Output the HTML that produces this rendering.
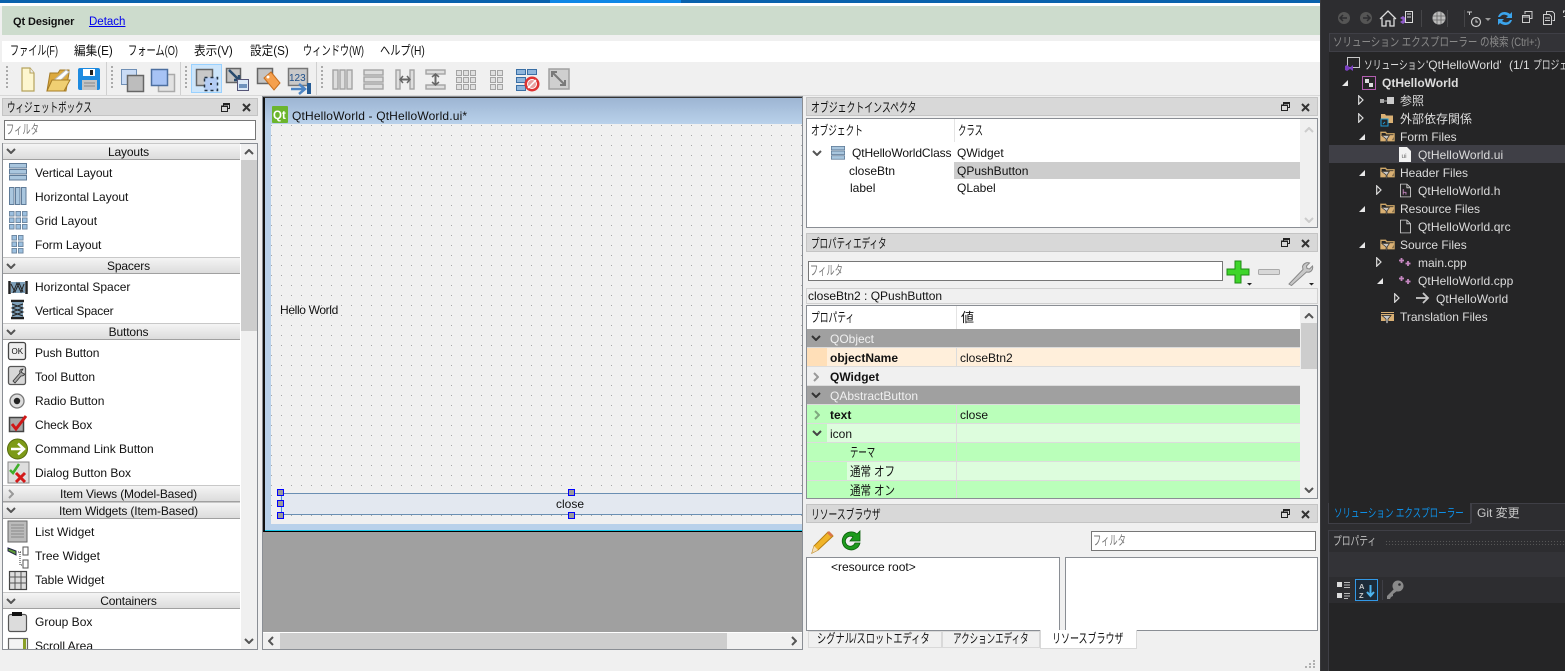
<!DOCTYPE html>
<html lang="ja"><head><meta charset="utf-8"><title>Qt Designer</title>
<style>
html,body{margin:0;padding:0}
body{width:1565px;height:671px;position:relative;overflow:hidden;background:#f0f0f0;font:12px/16px "Liberation Sans","Noto Sans CJK JP",sans-serif;color:#111}
div,span.t,svg.i{position:absolute}
.t{position:absolute;white-space:nowrap;line-height:16px;transform-origin:0 50%}
.k{font-size:13px}
.b{font-weight:bold}
.title{background:#d8d8d8;border:1px solid #c4c4c4;box-sizing:border-box}
.box{background:#fff;border:1px solid #8a8e94;box-sizing:border-box}
.input{background:#fff;border:1px solid #767676;box-sizing:border-box}
.ph{color:#777}
.cat{left:3px;width:237px;background:linear-gradient(#f4f4f4,#dcdcdc);border-bottom:1px solid #a0a0a0;border-top:1px solid #c8c8c8;box-sizing:border-box}
.cat span{position:absolute;left:0;right:-14px;top:0;text-align:center;line-height:16px;white-space:nowrap;letter-spacing:-.15px}
.r{left:807px;width:493px;height:18px}
.vs{position:absolute;left:956px;width:1px;background:#dcdcdc}
.d{color:#dcdcdc;position:absolute;white-space:nowrap;line-height:16px;transform-origin:0 50%}
.tree .d{margin-top:1px}
.h{width:5px;height:5px;background:#9a9a9a;border:1px solid #00f;box-sizing:content-box}
</style></head><body>
<svg width="0" height="0" style="position:absolute">
<defs>
<symbol id="fl" viewBox="0 0 9 9"><path d="M2.5 2.5V.5h6v5h-2M.5 3h6v5.500h-6z M.5 3.500h6M2.500 1.500h6" fill="none" stroke="#222"/></symbol>
<symbol id="xx" viewBox="0 0 9 9"><path d="M1 1l7 7M8 1L1 8" stroke="#333" stroke-width="2"/></symbol>
<symbol id="cd" viewBox="0 0 10 6"><path d="M1 1l4 4 4-4" fill="none" stroke="#555" stroke-width="2"/></symbol>
<symbol id="cr" viewBox="0 0 6 10"><path d="M1 1l4 4-4 4" fill="none" stroke="#999" stroke-width="2"/></symbol>
<symbol id="vl" viewBox="0 0 18 18"><g fill="#a9c6de" stroke="#5f7b98"><rect x=".5" y=".5" width="17" height="4.500"/><rect x=".5" y="6.500" width="17" height="4.500"/><rect x=".5" y="12.500" width="17" height="4.500"/></g></symbol>
<symbol id="gr" viewBox="0 0 6 6"><rect x=".5" y=".5" width="5" height="5" fill="#9cc0e0" stroke="#6c859f"/></symbol>
<symbol id="ff" viewBox="0 0 16 14"><path d="M1 2h5l1 1.500h8V11H1z" fill="none" stroke="#d0a868" stroke-width="1.400"/><path d="M1 5h14L13 11H1z" fill="#d9b074"/><path d="M2 5.500h8L7.500 9v4h-1V9z" fill="#c7c7c7" stroke="#252526" stroke-width=".7"/></symbol>
<symbol id="doc" viewBox="0 0 12 15"><path d="M.5.500h7l4 4v10H.500z" fill="none" stroke="#c8c8c8"/><path d="M7.500.500v4h4" fill="none" stroke="#c8c8c8"/></symbol>
<symbol id="tr" viewBox="0 0 8 8"><path d="M7 1v6H1z" fill="#e8e8e8"/></symbol>
<symbol id="tro" viewBox="0 0 6 10"><path d="M.7.800L5 5 .7 9.200z" fill="none" stroke="#dcdcdc" stroke-width="1.200"/></symbol>
<symbol id="pp" viewBox="0 0 12 8"><path d="M2.500 0v5M0 2.500h5M9 3v5M6.500 5.500h5" stroke="#c586c0" stroke-width="1.800"/></symbol>
</defs></svg>

<!-- top -->
<div style="left:0;top:0;width:1320px;height:3px;background:#0a62ad"></div>
<div style="left:550px;top:0;width:131px;height:3px;background:#0f87e6"></div>
<div style="left:0;top:3px;width:1320px;height:3px;background:#fff"></div>
<div style="left:2px;top:6px;width:1318px;height:29px;background:#cddccd"></div>
<span class="t b" style="left:13px;top:14px;font-size:11px;letter-spacing:-.1px">Qt Designer</span>
<span class="t" style="left:89px;top:14px;color:#00e;text-decoration:underline;font-size:11.500px">Detach</span>
<div style="left:2px;top:41px;width:1318px;height:21px;background:#fff"></div>
<span class="t k" style="left:10px;top:43px;transform:scaleX(.70)">ファイル(F)</span>
<span class="t" style="left:74px;top:43px;font-size:12.500px;transform:scaleX(.93)">編集(E)</span>
<span class="t k" style="left:128px;top:43px;transform:scaleX(.71)">フォーム(O)</span>
<span class="t" style="left:194px;top:43px;font-size:12.500px;transform:scaleX(.93)">表示(V)</span>
<span class="t" style="left:250px;top:43px;font-size:12.500px;transform:scaleX(.93)">設定(S)</span>
<span class="t k" style="left:303px;top:43px;transform:scaleX(.71)">ウィンドウ(W)</span>
<span class="t k" style="left:380px;top:43px;transform:scaleX(.785)">ヘルプ(H)</span>

<!-- toolbar -->
<div style="left:0;top:95px;width:1320px;height:1px;background:#d8d8d8"></div>
<svg class="i" style="left:0;top:62px" width="600" height="34">
<g stroke="#aaa" stroke-dasharray="2 2" stroke-width="2"><path d="M7 4v24M112 4v24M186 4v24M322 4v24"/></g>
<path d="M106.500 0v33M180.500 0v33M316.500 0v33" stroke="#d0d0d0"/>
<path d="M22 6h8l4 5v18H22z" fill="#fdf6cf" stroke="#b5a25c" stroke-width="1.200"/><path d="M30 6v5h4" fill="#eee" stroke="#b5a25c"/>
<path d="M47 29l3-18h8l2-3h9v3l-3 18z" fill="#dca93e" stroke="#a67c26"/><path d="M54 18l12-10 3 2-10 10z" fill="#fff" stroke="#bbb"/><path d="M47 29l5-11h18l-6 11z" fill="#f0cf72" stroke="#a67c26"/>
<rect x="78" y="6" width="22" height="22" rx="2" fill="#1e8be0"/><rect x="83" y="7" width="12" height="7" fill="#fff"/><rect x="90" y="8" width="3" height="5" fill="#222"/><rect x="82" y="18" width="15" height="10" fill="#c4c4c4"/><path d="M84 21h11M84 24h11" stroke="#888"/>
<rect x="121.500" y="7.500" width="15" height="15" fill="#c9dbf5" stroke="#6f8fb5"/><rect x="127.500" y="13.500" width="16" height="16" fill="#bdbdbd" stroke="#666" stroke-width="1.500"/>
<rect x="158.500" y="12.500" width="16" height="17" fill="#e2e2e2" stroke="#aaa" stroke-width="1.500"/><rect x="151.500" y="7.500" width="16" height="16" fill="#a7c3f5" stroke="#4d6fa0" stroke-width="1.500"/>
<rect x="191.500" y="2.500" width="30" height="28" fill="#cde5fa" stroke="#99d1ff"/>
<rect x="196.500" y="7.500" width="16" height="16" fill="#c8c8c8" stroke="#666" stroke-width="1.500"/><rect x="204.500" y="15.500" width="13" height="13" fill="#b4cdf5" stroke="#234" stroke-width="1.500" stroke-dasharray="3 3"/><rect x="210" y="21" width="2" height="2" fill="#333"/>
<rect x="226.500" y="6.500" width="14" height="14" fill="#c4c4c4" stroke="#666" stroke-width="1.500"/><path d="M229 8l9 9M234 18h5v-5" stroke="#274a6e" stroke-width="2.500" fill="none"/><rect x="237.500" y="17.500" width="11" height="11" fill="#dbe8f7" stroke="#557"/><rect x="239" y="22" width="8" height="4" fill="#6f92bd"/>
<rect x="257.500" y="6.500" width="15" height="15" fill="#c4c4c4" stroke="#666" stroke-width="1.500"/><path d="M264 16l7-6 9 11-6 7z" fill="#f5a04e" stroke="#c76f1f"/><circle cx="268" cy="15" r="1.500" fill="#fff"/>
<rect x="288.500" y="6.500" width="19" height="17" fill="#c9c9c9" stroke="#777" stroke-width="1.500"/><text x="289" y="19" font-size="10" font-family="Liberation Sans" fill="#1d4e89">123</text><path d="M291 27h12M299 22l6 5-6 5" fill="none" stroke="#4d85c4" stroke-width="2.500"/><rect x="307" y="21" width="4" height="11" fill="#255c96"/>
<g fill="#dedede" stroke="#a4a4a4" stroke-width="1.400"><rect x="333" y="8" width="5" height="19"/><rect x="340" y="8" width="5" height="19"/><rect x="347" y="8" width="5" height="19"/>
<rect x="364" y="8" width="19" height="5"/><rect x="364" y="15" width="19" height="5"/><rect x="364" y="22" width="19" height="5"/>
<rect x="396" y="8" width="4" height="19"/><rect x="410" y="8" width="4" height="19"/>
<rect x="426" y="8" width="19" height="4"/><rect x="426" y="23" width="19" height="4"/></g>
<path d="M400 17.500h10M435.500 12v11" stroke="#666" stroke-width="2"/><path d="M403 14l-3 3.500 3 3.500M407 14l3 3.500-3 3.500M432 15l3.500-3 3.500 3M432 20l3.500 3 3.500-3" fill="none" stroke="#666" stroke-width="1.500"/>
<g fill="#e0e0e0" stroke="#a4a4a4"><rect x="456.500" y="8.500" width="5" height="5"/><rect x="463.500" y="8.500" width="5" height="5"/><rect x="470.500" y="8.500" width="5" height="5"/><rect x="456.500" y="15.500" width="5" height="5"/><rect x="463.500" y="15.500" width="5" height="5"/><rect x="470.500" y="15.500" width="5" height="5"/><rect x="456.500" y="22.500" width="5" height="5"/><rect x="463.500" y="22.500" width="5" height="5"/><rect x="470.500" y="22.500" width="5" height="5"/>
<rect x="490.500" y="8.500" width="5" height="5"/><rect x="497.500" y="8.500" width="5" height="5"/><rect x="490.500" y="15.500" width="5" height="5"/><rect x="497.500" y="15.500" width="5" height="5"/><rect x="490.500" y="22.500" width="5" height="5"/><rect x="497.500" y="22.500" width="5" height="5"/></g>
<g fill="#8fb6dc" stroke="#3a6fa5"><rect x="516.500" y="7.500" width="9" height="5"/><rect x="527.500" y="7.500" width="9" height="5"/><rect x="516.500" y="15.500" width="9" height="5"/><rect x="516.500" y="23.500" width="9" height="5"/></g>
<circle cx="532" cy="22" r="7.500" fill="#d33"/><circle cx="532" cy="22" r="4.500" fill="#e9a0a0" stroke="#fff"/><path d="M528 26l8-8" stroke="#fff" stroke-width="1.500"/>
<rect x="549" y="7" width="20" height="20" fill="#cfcfcf" stroke="#a0a0a0" stroke-width="1.500"/><path d="M552 10l13 13M552 15v-5h5M565 18v5h-5" fill="none" stroke="#7a7a7a" stroke-width="2"/>
</svg>

<!-- widget box -->
<div class="title" style="left:2px;top:98px;width:256px;height:18px"></div>
<span class="t k" style="left:7px;top:100px;transform:scaleX(.655)">ウィジェットボックス</span>
<svg class="i" style="left:221px;top:103px" width="9" height="9"><use href="#fl"/></svg>
<svg class="i" style="left:242px;top:103px" width="9" height="9"><use href="#xx"/></svg>
<div class="input" style="left:4px;top:120px;width:252px;height:20px"></div>
<span class="t ph k" style="left:6px;top:122px;transform:scaleX(.637)">フィルタ</span>
<div class="box" style="left:2px;top:143px;width:256px;height:507px"></div>
<div style="left:241px;top:144px;width:16px;height:505px;background:#f0f0f0"></div>
<div style="left:241px;top:160px;width:16px;height:171px;background:#cdcdcd"></div>
<svg class="i" style="left:244px;top:149px" width="10" height="6"><path d="M1 5l4-4 4 4" fill="none" stroke="#555" stroke-width="2"/></svg>
<svg class="i" style="left:244px;top:638px" width="10" height="6"><use href="#cd"/></svg>

<div class="cat" style="top:143px;height:17px"><span>Layouts</span></div>
<div class="cat" style="top:257px;height:17px"><span>Spacers</span></div>
<div class="cat" style="top:323px;height:17px"><span>Buttons</span></div>
<div class="cat" style="top:485px;height:17px"><span>Item Views (Model-Based)</span></div>
<div class="cat" style="top:502px;height:17px"><span>Item Widgets (Item-Based)</span></div>
<div class="cat" style="top:592px;height:17px"><span>Containers</span></div>
<svg class="i" style="left:6px;top:148px" width="10" height="6"><use href="#cd"/></svg>
<svg class="i" style="left:6px;top:263px" width="10" height="6"><use href="#cd"/></svg>
<svg class="i" style="left:6px;top:329px" width="10" height="6"><use href="#cd"/></svg>
<svg class="i" style="left:8px;top:489px" width="6" height="10"><use href="#cr"/></svg>
<svg class="i" style="left:6px;top:507px" width="10" height="6"><use href="#cd"/></svg>
<svg class="i" style="left:6px;top:598px" width="10" height="6"><use href="#cd"/></svg>

<span class="t" style="left:35px;top:165px;letter-spacing:-.1px">Vertical Layout</span>
<span class="t" style="left:35px;top:189px">Horizontal Layout</span>
<span class="t" style="left:35px;top:213px">Grid Layout</span>
<span class="t" style="left:35px;top:237px;letter-spacing:-.1px">Form Layout</span>
<span class="t" style="left:35px;top:279px">Horizontal Spacer</span>
<span class="t" style="left:35px;top:303px;letter-spacing:-.15px">Vertical Spacer</span>
<span class="t" style="left:35px;top:345px;letter-spacing:-.1px">Push Button</span>
<span class="t" style="left:35px;top:369px">Tool Button</span>
<span class="t" style="left:35px;top:393px">Radio Button</span>
<span class="t" style="left:35px;top:417px;letter-spacing:-.1px">Check Box</span>
<span class="t" style="left:35px;top:441px">Command Link Button</span>
<span class="t" style="left:35px;top:465px">Dialog Button Box</span>
<span class="t" style="left:35px;top:524px">List Widget</span>
<span class="t" style="left:35px;top:548px">Tree Widget</span>
<span class="t" style="left:35px;top:572px">Table Widget</span>
<span class="t" style="left:35px;top:614px">Group Box</span>
<span class="t" style="left:35px;top:638px;height:11px;overflow:hidden">Scroll Area</span>

<svg class="i" style="left:0;top:160px" width="32" height="489">
<use href="#vl" x="9" y="3" width="18" height="18"/>
<g transform="translate(9,27)"><g fill="#a9c6de" stroke="#5f7b98"><rect x=".5" y=".5" width="4.500" height="17"/><rect x="6.500" y=".5" width="4.500" height="17"/><rect x="12.500" y=".5" width="4.500" height="17"/></g></g>
<g><use href="#gr" x="9" y="51" width="5.500" height="5.500"/><use href="#gr" x="15.500" y="51" width="5.500" height="5.500"/><use href="#gr" x="22" y="51" width="5.500" height="5.500"/><use href="#gr" x="9" y="57.500" width="5.500" height="5.500"/><use href="#gr" x="15.500" y="57.500" width="5.500" height="5.500"/><use href="#gr" x="22" y="57.500" width="5.500" height="5.500"/><use href="#gr" x="9" y="64" width="5.500" height="5.500"/><use href="#gr" x="15.500" y="64" width="5.500" height="5.500"/><use href="#gr" x="22" y="64" width="5.500" height="5.500"/></g>
<use href="#gr" x="11.500" y="75" width="5.500" height="5.500"/><use href="#gr" x="18" y="75" width="5.500" height="5.500"/><use href="#gr" x="11.500" y="81.500" width="5.500" height="5.500"/><use href="#gr" x="18" y="81.500" width="5.500" height="5.500"/><use href="#gr" x="11.500" y="88" width="5.500" height="5.500"/><use href="#gr" x="18" y="88" width="5.500" height="5.500"/>
<!-- spacers -->
<path d="M9.500 121v13M26.500 121v13" stroke="#222" stroke-width="2.500"/><rect x="11" y="122" width="14" height="11" fill="#7d9fb8"/><path d="M11 124l4 8 4-9 4 9M13 133l4-10 4 9 3-8" fill="none" stroke="#222"/>
<path d="M11 141h13M11 158h13" stroke="#222" stroke-width="2.500"/><rect x="12" y="142" width="11" height="15" fill="#7d9fb8"/><path d="M12 144l11 4-11 4 11 4M23 144l-11 4 11 4-11 4" fill="none" stroke="#222"/>
<!-- buttons -->
<rect x="8.500" y="182.500" width="17" height="17" rx="2" fill="#eee" stroke="#444" stroke-width="1.300"/><text x="11.500" y="194" font-size="8" font-family="Liberation Sans" fill="#111">OK</text>
<rect x="8.500" y="206.500" width="17" height="18" rx="2" fill="#d8d8d8" stroke="#555" stroke-width="1.300"/><path d="M13 221l7-8c-1-3 1-4 3-4l-2 3 3 2c1-1 1 2-3 2l-6 7z" fill="#aaa" stroke="#333" stroke-width=".8"/>
<circle cx="17" cy="241" r="7" fill="#ddd" stroke="#777" stroke-width="1.300"/><circle cx="17" cy="241" r="3.200" fill="#222"/>
<rect x="9.500" y="257.500" width="14" height="14" fill="#aaa" stroke="#444" stroke-width="1.500"/><path d="M12 264l4 5 10-13" fill="none" stroke="#d01818" stroke-width="3"/>
<circle cx="17.500" cy="289" r="10" fill="#7d9a17" stroke="#55690f"/><path d="M11 289h12M18 283.500l6 5.500-6 5.500" fill="none" stroke="#fff" stroke-width="2.500"/>
<rect x="8" y="302" width="21" height="21" fill="#dedede" stroke="#888"/><path d="M10 310l3 3 6-9" fill="none" stroke="#3fae2a" stroke-width="2.500"/><path d="M16 313l9 9M25 313l-9 9" stroke="#d31a1a" stroke-width="3"/>
<!-- item widgets -->
<rect x="8" y="361" width="19" height="21" fill="#bbb" stroke="#666"/><path d="M11 365h13M11 368h13M11 371h13M11 374h13M11 377h13" stroke="#888"/>
<path d="M8 388l8 3 0 4-8-4z" fill="#5d9a38" stroke="#224"/><path d="M18 392h4M20 392v13h2" fill="none" stroke="#333" stroke-dasharray="1 1"/><rect x="23" y="387" width="5" height="8" fill="#fff" stroke="#555"/><rect x="23" y="400" width="5" height="8" fill="#fff" stroke="#555"/>
<rect x="9.500" y="411.500" width="17" height="18" fill="#ddd" stroke="#444" stroke-width="1.200"/><path d="M9 417h18M9 423h18M15 412v17M21 412v17" stroke="#555"/>
<!-- containers -->
<rect x="8.500" y="454.500" width="18" height="17" rx="2" fill="#dcdcdc" stroke="#555" stroke-width="1.200"/><rect x="12" y="452" width="10" height="4" fill="#111"/>
<rect x="8.500" y="478.500" width="19" height="11" fill="#f4f4f4" stroke="#666" stroke-width="1.200"/><rect x="23" y="479" width="3" height="10" fill="#8aa028"/>
</svg>

<!-- MDI -->
<div style="left:262px;top:96px;width:541px;height:554px;background:#a0a0a0;border:1px solid #8a8e94;box-sizing:border-box"></div>
<div style="left:263px;top:97px;width:539px;height:435px;background:#b9d1ea;border-left:2px solid #111;border-top:1px solid #333;border-bottom:2px solid #000;box-sizing:border-box"></div>
<div style="left:265px;top:98px;width:537px;height:26px;background:linear-gradient(#9db5d3,#b9d1ea)"></div>
<div style="left:265px;top:530px;width:537px;height:1px;background:#16c6e8"></div>
<div style="left:271px;top:124px;width:531px;height:400px;background:#f0f0f0"></div>
<svg class="i" style="left:271px;top:124px" width="531" height="400"><defs><pattern id="dots" width="10" height="10" patternUnits="userSpaceOnUse"><rect x="0" y="1" width="1" height="1" fill="#a8a8a8"/></pattern></defs><rect width="531" height="400" fill="url(#dots)"/></svg>
<svg class="i" style="left:272px;top:106px" width="16" height="17"><rect width="16" height="17" rx="1" fill="#6cb52d"/><text x="1" y="13" font-size="11.500" font-weight="bold" font-family="Liberation Sans" fill="#fff">Qt</text></svg>
<span class="t" style="left:292px;top:108px;letter-spacing:.16px">QtHelloWorld - QtHelloWorld.ui*</span>
<span class="t" style="left:280px;top:302px;letter-spacing:-.35px">Hello World</span>
<div style="left:280px;top:493px;width:522px;height:20px;background:#e3e8f0;border-top:1px solid #6a8fb3;border-bottom:1px solid #6a8fb3;box-sizing:content-box"></div>
<div style="left:281px;top:493px;width:1px;height:21px;background:#4a90d9"></div>
<span class="t" style="left:556px;top:496px">close</span>
<div class="h" style="left:277px;top:489px"></div><div class="h" style="left:277px;top:500px"></div><div class="h" style="left:277px;top:512px"></div>
<div class="h" style="left:568px;top:489px"></div><div class="h" style="left:568px;top:512px"></div>
<div style="left:263px;top:632px;width:539px;height:17px;background:#f0f0f0;border-top:1px solid #fff;box-sizing:border-box"></div>
<div style="left:280px;top:633px;width:447px;height:16px;background:#cdcdcd"></div>
<svg class="i" style="left:268px;top:636px" width="6" height="10"><path d="M5 1L1 5l4 4" fill="none" stroke="#555" stroke-width="2"/></svg>
<svg class="i" style="left:791px;top:636px" width="6" height="10"><path d="M1 1l4 4-4 4" fill="none" stroke="#555" stroke-width="2"/></svg>

<!-- object inspector -->
<div class="title" style="left:806px;top:97px;width:512px;height:19px"></div>
<span class="t k" style="left:811px;top:100px;transform:scaleX(.683)">オブジェクトインスペクタ</span>
<svg class="i" style="left:1281px;top:102px" width="9" height="9"><use href="#fl"/></svg>
<svg class="i" style="left:1301px;top:103px" width="9" height="9"><use href="#xx"/></svg>
<div class="box" style="left:806px;top:118px;width:512px;height:110px"></div>
<div style="left:954px;top:119px;width:1px;height:23px;background:#e4e4e4"></div>
<div style="left:1300px;top:119px;width:17px;height:108px;background:#f0f0f0"></div>
<svg class="i" style="left:1304px;top:127px" width="10" height="6"><path d="M1 5l4-4 4 4" fill="none" stroke="#ccc" stroke-width="2"/></svg>
<svg class="i" style="left:1304px;top:217px" width="10" height="6"><path d="M1 1l4 4 4-4" fill="none" stroke="#ccc" stroke-width="2"/></svg>
<span class="t k" style="left:811px;top:123px;transform:scaleX(.665)">オブジェクト</span>
<span class="t k" style="left:958px;top:123px;transform:scaleX(.646)">クラス</span>
<svg class="i" style="left:812px;top:150px" width="10" height="6"><use href="#cd"/></svg>
<svg class="i" style="left:831px;top:146px" width="14" height="14" viewBox="0 0 18 18"><use href="#vl"/></svg>
<span class="t" style="left:852px;top:145px;letter-spacing:-.1px">QtHelloWorldClass</span>
<span class="t" style="left:957px;top:145px">QWidget</span>
<div style="left:954px;top:162px;width:346px;height:17px;background:#cdcdcd"></div>
<span class="t" style="left:849px;top:163px">closeBtn</span>
<span class="t" style="left:957px;top:163px">QPushButton</span>
<span class="t" style="left:850px;top:180px">label</span>
<span class="t" style="left:957px;top:180px">QLabel</span>

<!-- property editor -->
<div class="title" style="left:806px;top:233px;width:512px;height:19px"></div>
<span class="t k" style="left:811px;top:236px;transform:scaleX(.655)">プロパティエディタ</span>
<svg class="i" style="left:1281px;top:238px" width="9" height="9"><use href="#fl"/></svg>
<svg class="i" style="left:1301px;top:239px" width="9" height="9"><use href="#xx"/></svg>
<div class="input" style="left:808px;top:261px;width:415px;height:20px"></div>
<span class="t ph k" style="left:810px;top:263px;transform:scaleX(.637)">フィルタ</span>
<svg class="i" style="left:1226px;top:260px" width="90" height="26">
<path d="M9 1h6v8h8v6h-8v8H9v-8H1V9h8z" fill="#3ed52a" stroke="#1e8a14"/><path d="M21 23h5l-2.500 2.500z" fill="#222"/>
<rect x="32.500" y="9.500" width="21" height="5" rx="1" fill="#d8d8d8" stroke="#aaa"/>
<path d="M63 24L77 9.500l-.5-3c1-3 4-4.500 7-3.500l-3 3 .5 2.500 2.500.5 3-3c1 4-2 7-6 6L65.500 25.500z" fill="#c8c8c8" stroke="#888"/><path d="M83 23h5l-2.500 2.500z" fill="#222"/>
</svg>
<div style="left:806px;top:288px;width:512px;height:16px;background:#f0f0f0;border:1px solid #d0d0d0;box-sizing:border-box"></div>
<span class="t" style="left:808px;top:288px">closeBtn2 : QPushButton</span>

<div class="box" style="left:806px;top:305px;width:512px;height:194px"></div>
<div style="left:1300px;top:306px;width:17px;height:192px;background:#f0f0f0"></div>
<div style="left:1301px;top:323px;width:16px;height:46px;background:#cdcdcd"></div>
<svg class="i" style="left:1304px;top:313px" width="10" height="6"><path d="M1 5l4-4 4 4" fill="none" stroke="#555" stroke-width="2"/></svg>
<svg class="i" style="left:1304px;top:487px" width="10" height="6"><use href="#cd"/></svg>
<div style="left:956px;top:306px;width:1px;height:23px;background:#e4e4e4"></div>
<span class="t k" style="left:811px;top:310px;transform:scaleX(.674)">プロパティ</span>
<span class="t" style="left:961px;top:310px;font-size:13px">値</span>

<div style="left:807px;top:329px;width:493px;height:169px;background:#dcdcdc"></div>
<div class="r" style="top:329px;background:#a0a0a0"></div>
<div class="r" style="top:348px;background:#ffefdb"></div>
<div style="left:807px;top:348px;width:20px;height:18px;background:#ffdfb8"></div>
<div class="r" style="top:367px;background:#f0f0f0"></div>
<div class="r" style="top:386px;background:#a0a0a0"></div>
<div class="r" style="top:405px;background:#baffba"></div>
<div class="r" style="top:424px;background:#ddfddd"></div>
<div style="left:807px;top:424px;width:20px;height:18px;background:#baffba"></div>
<div class="r" style="top:443px;background:#baffba"></div>
<div class="r" style="top:462px;background:#ddfddd"></div>
<div style="left:807px;top:462px;width:40px;height:18px;background:#baffba"></div>
<div class="r" style="top:481px;height:17px;background:#baffba"></div>
<div class="vs" style="top:348px;height:18px"></div>
<div class="vs" style="top:405px;height:93px"></div>

<svg class="i" style="left:811px;top:335px" width="10" height="6"><path d="M1 1l4 4 4-4" fill="none" stroke="#333" stroke-width="2"/></svg>
<span class="t" style="left:830px;top:331px;color:#f0f0f0">QObject</span>
<span class="t b" style="left:830px;top:350px">objectName</span>
<span class="t" style="left:960px;top:350px">closeBtn2</span>
<svg class="i" style="left:813px;top:372px" width="6" height="10"><use href="#cr"/></svg>
<span class="t b" style="left:830px;top:369px">QWidget</span>
<svg class="i" style="left:811px;top:392px" width="10" height="6"><path d="M1 1l4 4 4-4" fill="none" stroke="#333" stroke-width="2"/></svg>
<span class="t" style="left:830px;top:388px;color:#f0f0f0">QAbstractButton</span>
<svg class="i" style="left:814px;top:410px" width="6" height="10"><path d="M1 1l4 4-4 4" fill="none" stroke="#7fa87f" stroke-width="2"/></svg>
<span class="t b" style="left:830px;top:407px">text</span>
<span class="t" style="left:960px;top:407px">close</span>
<svg class="i" style="left:812px;top:430px" width="10" height="6"><path d="M1 1l4 4 4-4" fill="none" stroke="#444" stroke-width="2"/></svg>
<span class="t" style="left:830px;top:426px">icon</span>
<span class="t k" style="left:850px;top:445px;transform:scaleX(.646)">テーマ</span>
<span class="t k" style="left:850px;top:464px;transform:scaleX(.81)">通常 オフ</span>
<span class="t k" style="left:850px;top:483px;height:15px;overflow:hidden;transform:scaleX(.81)">通常 オン</span>

<!-- resource browser -->
<div class="title" style="left:806px;top:504px;width:512px;height:19px"></div>
<span class="t k" style="left:811px;top:507px;transform:scaleX(.674)">リソースブラウザ</span>
<svg class="i" style="left:1281px;top:509px" width="9" height="9"><use href="#fl"/></svg>
<svg class="i" style="left:1301px;top:510px" width="9" height="9"><use href="#xx"/></svg>
<svg class="i" style="left:810px;top:530px" width="54" height="25">
<path d="M2 23l2-7L18 2l5 4L8 20z" fill="#f0b429" stroke="#b67f14"/><path d="M2 23l2-7 4 4z" fill="#f5deb3"/><path d="M17 3l2-2 4 4-2 2z" fill="#d9764a"/>
<path d="M47 4a9 9 0 1 0 3 9h-5a5 5 0 1 1-2-6l-3 4h10V1z" fill="#1d9a1d" stroke="#0b5f0b" stroke-width=".8"/>
</svg>
<div class="input" style="left:1091px;top:531px;width:225px;height:20px"></div>
<span class="t ph k" style="left:1093px;top:533px;transform:scaleX(.637)">フィルタ</span>
<div class="box" style="left:806px;top:557px;width:254px;height:74px"></div>
<div class="box" style="left:1065px;top:557px;width:253px;height:74px"></div>
<span class="t" style="left:831px;top:559px">&lt;resource root&gt;</span>
<div style="left:808px;top:631px;width:134px;height:17px;background:#f0f0f0;border:1px solid #d9d9d9;box-sizing:border-box"></div>
<div style="left:942px;top:631px;width:98px;height:17px;background:#f0f0f0;border:1px solid #d9d9d9;box-sizing:border-box"></div>
<div style="left:1040px;top:630px;width:97px;height:19px;background:#fff;border:1px solid #d9d9d9;border-top:0;box-sizing:border-box"></div>
<span class="t k" style="left:817px;top:631px;transform:scaleX(.71)">シグナル/スロットエディタ</span>
<span class="t k" style="left:953px;top:631px;transform:scaleX(.655)">アクションエディタ</span>
<span class="t k" style="left:1052px;top:631px;transform:scaleX(.692)">リソースブラウザ</span>
<svg class="i" style="left:1305px;top:660px" width="11" height="9" fill="#b0b0b0"><rect x="8" y="0" width="2" height="2"/><rect x="4" y="3" width="2" height="2"/><rect x="8" y="3" width="2" height="2"/><rect x="0" y="6" width="2" height="2"/><rect x="4" y="6" width="2" height="2"/><rect x="8" y="6" width="2" height="2"/></svg>

<!-- right dark panel -->
<div style="left:1320px;top:0;width:245px;height:671px;background:#2d2d30"></div>
<div style="left:1320px;top:0;width:1px;height:671px;background:#3a3a3d"></div>
<div style="left:1329px;top:33px;width:236px;height:19px;background:#333337;border:1px solid #3f3f46;border-right:0;box-sizing:border-box"></div>
<div style="left:1329px;top:52px;width:236px;height:451px;background:#252526"></div>
<div style="left:1329px;top:145px;width:236px;height:18px;background:#3f3f46"></div>
<span class="d" style="left:1333px;top:34px;color:#8a8a8a;transform:scaleX(.79)">ソリューション エクスプローラー の検索 (Ctrl+:)</span>

<svg class="i" style="left:1330px;top:2px" width="235" height="31">
<circle cx="14" cy="16" r="6" fill="#555"/><path d="M17 16h-6M13 13l-3 3 3 3" fill="none" stroke="#2d2d30" stroke-width="1.500"/>
<circle cx="36" cy="16" r="6" fill="#555"/><path d="M33 16h6M37 13l3 3-3 3" fill="none" stroke="#2d2d30" stroke-width="1.500"/>
<path d="M50 17l8-8 8 8M52 16v8h4v-5h4v5h4v-8" fill="none" stroke="#dcdcdc" stroke-width="1.300"/>
<path d="M70 16l3-2 5 4-5 4-3-2 3-2z" fill="#8f5cc9"/><rect x="75.500" y="9.500" width="7" height="11" fill="#2d2d30" stroke="#dcdcdc"/><path d="M77 12h4M77 15h4" stroke="#dcdcdc"/>
<path d="M91.500 8v17M117.500 8v17M134.500 8v17" stroke="#454548"/>
<circle cx="109" cy="16" r="6.500" fill="#bdbdbd"/><path d="M102.500 14h13M102.500 18h13M107 10v12M111 10v12" stroke="#666" stroke-width=".8"/>
<path d="M137 10h5M139.500 10v3" stroke="#ccc"/><circle cx="146" cy="20" r="4.500" fill="none" stroke="#ccc" stroke-width="1.200"/><path d="M146 17.500V20h2" stroke="#ccc" fill="none"/><path d="M155 16h6l-3 3z" fill="#999"/>
<path d="M168 15c2-6 8-6 12-3l2-2v6h-6l2-2c-3-2-6-2-8 1zM182 18c-2 6-8 6-12 3l-2 2v-6h6l-2 2c3 2 6 2 8-1z" fill="#3ba4ec"/>
<path d="M192.500 13.500h7v7h-7zM195 12v-2.500h7v7h-2M192.500 15h7" fill="none" stroke="#ccc"/>
<path d="M216.500 12v-2.500h6l2 2v7h-2M213.500 12.500h6l2 2v8h-8zM215 16h5M215 18.500h5" fill="none" stroke="#ccc"/>
<path d="M233.500 14.500h2M233.500 11v-2h2" fill="none" stroke="#ccc"/>
</svg>

<!-- tree -->
<div class="tree" style="left:0;top:2px;width:1565px;height:330px">
<svg class="i" style="left:1344px;top:55px" width="16" height="15" viewBox="0 0 16 15"><rect x="3.500" y=".5" width="12" height="10" fill="none" stroke="#c8c8c8"/><path d="M1 9l2-1 3 2.500L9 8v6l-3-2-3 2-2-1z" fill="#7a3fc0"/></svg>
<span class="d" style="left:1364px;top:54px;transform:scaleX(.73)">ソリューション</span>
<span class="d" style="left:1426px;top:54px">'QtHelloWorld'</span>
<span class="d" style="left:1509px;top:54px">(1/1</span>
<span class="d" style="left:1533px;top:54px;transform:scaleX(.73)">プロジェクト)</span>

<svg class="i" style="left:1341px;top:77px" width="8" height="8"><use href="#tr"/></svg>
<svg class="i" style="left:1362px;top:74px" width="14" height="14"><rect x=".5" y=".5" width="13" height="13" fill="none" stroke="#b25eb0"/><rect x="3" y="3" width="4" height="4" fill="#ddd"/><rect x="7" y="7" width="4" height="4" fill="#ddd"/></svg>
<span class="d b" style="left:1382px;top:72px">QtHelloWorld</span>

<svg class="i" style="left:1358px;top:93px" width="6" height="10"><use href="#tro"/></svg>
<svg class="i" style="left:1380px;top:95px" width="14" height="8"><rect x="0" y="2" width="4" height="4" fill="#aaa"/><path d="M4 4h3" stroke="#aaa"/><rect x="7" y="0" width="7" height="7" fill="#ccc"/></svg>
<span class="d" style="left:1400px;top:90px">参照</span>

<svg class="i" style="left:1358px;top:111px" width="6" height="10"><use href="#tro"/></svg>
<svg class="i" style="left:1380px;top:110px" width="14" height="15"><path d="M1 2h4l1 1.500h7V11H1z" fill="#d9b074"/><rect x="1" y="7" width="7" height="7" fill="#252526" stroke="#1e9ad6"/><path d="M3 12l2-2" stroke="#1e9ad6"/></svg>
<span class="d" style="left:1400px;top:108px">外部依存関係</span>

<svg class="i" style="left:1358px;top:131px" width="8" height="8"><use href="#tr"/></svg>
<svg class="i" style="left:1380px;top:128px" width="15" height="14"><use href="#ff"/></svg>
<span class="d" style="left:1400px;top:126px">Form Files</span>

<svg class="i" style="left:1399px;top:145px" width="12" height="15"><path d="M0 0h8l4 4v11H0z" fill="#f2f2f2"/><text x="2.500" y="11" font-size="6.500" font-family="Liberation Sans" fill="#666">ui</text></svg>
<span class="d" style="left:1418px;top:144px;letter-spacing:.1px">QtHelloWorld.ui</span>

<svg class="i" style="left:1358px;top:167px" width="8" height="8"><use href="#tr"/></svg>
<svg class="i" style="left:1380px;top:164px" width="15" height="14"><use href="#ff"/></svg>
<span class="d" style="left:1400px;top:162px">Header Files</span>

<svg class="i" style="left:1376px;top:183px" width="6" height="10"><use href="#tro"/></svg>
<svg class="i" style="left:1400px;top:181px" width="11" height="15" viewBox="0 0 12 15"><use href="#doc"/><path d="M3.500 6v6M3.500 9.500h3v2.500" fill="none" stroke="#c586c0"/></svg>
<span class="d" style="left:1418px;top:180px;letter-spacing:.1px">QtHelloWorld.h</span>

<svg class="i" style="left:1358px;top:203px" width="8" height="8"><use href="#tr"/></svg>
<svg class="i" style="left:1380px;top:200px" width="15" height="14"><use href="#ff"/></svg>
<span class="d" style="left:1400px;top:198px">Resource Files</span>
<svg class="i" style="left:1400px;top:217px" width="11" height="15" viewBox="0 0 12 15"><use href="#doc"/></svg>
<span class="d" style="left:1418px;top:216px;letter-spacing:.1px">QtHelloWorld.qrc</span>

<svg class="i" style="left:1358px;top:239px" width="8" height="8"><use href="#tr"/></svg>
<svg class="i" style="left:1380px;top:236px" width="15" height="14"><use href="#ff"/></svg>
<span class="d" style="left:1400px;top:234px">Source Files</span>

<svg class="i" style="left:1376px;top:255px" width="6" height="10"><use href="#tro"/></svg>
<svg class="i" style="left:1399px;top:256px" width="12" height="8"><use href="#pp"/></svg>
<span class="d" style="left:1418px;top:252px">main.cpp</span>

<svg class="i" style="left:1376px;top:275px" width="8" height="8"><use href="#tr"/></svg>
<svg class="i" style="left:1399px;top:274px" width="12" height="8"><use href="#pp"/></svg>
<span class="d" style="left:1418px;top:270px;letter-spacing:.1px">QtHelloWorld.cpp</span>

<svg class="i" style="left:1394px;top:291px" width="6" height="10"><use href="#tro"/></svg>
<svg class="i" style="left:1415px;top:290px" width="15" height="12"><path d="M1 6h12M8 1l5 5-5 5" fill="none" stroke="#c8c8c8" stroke-width="1.800"/></svg>
<span class="d" style="left:1436px;top:288px;letter-spacing:.1px">QtHelloWorld</span>

<svg class="i" style="left:1380px;top:308px" width="15" height="14"><path d="M1 2h13v9H1z" fill="#d9b074"/><path d="M1 3.500h13" stroke="#252526"/><path d="M2 5.500h9L8 9v4.500H6V9z" fill="#c7c7c7" stroke="#252526" stroke-width=".7"/></svg>
<span class="d" style="left:1400px;top:306px">Translation Files</span>
</div>

<!-- tabs -->
<div style="left:1328px;top:503px;width:143px;height:21px;background:#252526;border:1px solid #3f3f46;border-top:0;box-sizing:border-box"></div>
<div style="left:1471px;top:503px;width:94px;height:20px;background:#2d2d30;border-top:1px solid #3f3f46;border-left:1px solid #3f3f46;box-sizing:border-box"></div>
<span class="d" style="left:1334px;top:505px;color:#0e8fe6;transform:scaleX(.71)">ソリューション エクスプローラー</span>
<span class="d" style="left:1477px;top:505px;color:#c8c8c8">Git 変更</span>

<!-- properties -->
<div style="left:1328px;top:530px;width:237px;height:141px;background:#252526;border-left:1px solid #3f3f46;border-top:1px solid #3f3f46;box-sizing:border-box"></div>
<div style="left:1329px;top:531px;width:236px;height:21px;background:#2d2d30"></div>
<span class="d" style="left:1333px;top:533px;color:#c0c0c0;transform:scaleX(.73)">プロパティ</span>
<div style="left:1385px;top:540px;width:180px;height:5px;background-image:radial-gradient(#555 .6px,transparent .8px);background-size:3px 3px"></div>
<div style="left:1329px;top:552px;width:236px;height:25px;background:#333337;border-bottom:1px solid #222"></div>
<div style="left:1329px;top:577px;width:236px;height:26px;background:#2d2d30"></div>
<svg class="i" style="left:1335px;top:578px" width="80" height="24">
<path d="M2 4h5v5H2zM2 15h5v5H2z" fill="#ddd"/><path d="M9 4.500h6M9 7h6M9 9.500h6M9 15.500h6M9 18h6M9 20.500h4" stroke="#bbb"/>
<rect x="20.500" y="1.500" width="22" height="21" fill="#1c2a38" stroke="#3399e6"/><text x="24" y="11" font-size="7.500" font-weight="bold" font-family="Liberation Sans" fill="#ccc">A</text><text x="24" y="20" font-size="7.500" font-weight="bold" font-family="Liberation Sans" fill="#ccc">Z</text><path d="M35.500 7v11M32 14l3.500 4 3.500-4" fill="none" stroke="#4db4ef" stroke-width="2"/>
<path d="M47.500 2v20" stroke="#3f3f46"/>
<circle cx="63" cy="8" r="5.500" fill="#8a8a8a"/><path d="M59 11l-7 7v3h3l1-2 2-1v-2l4-3z" fill="#8a8a8a"/><circle cx="64.500" cy="6.500" r="1.300" fill="#2d2d30"/>
</svg>
</body></html>
